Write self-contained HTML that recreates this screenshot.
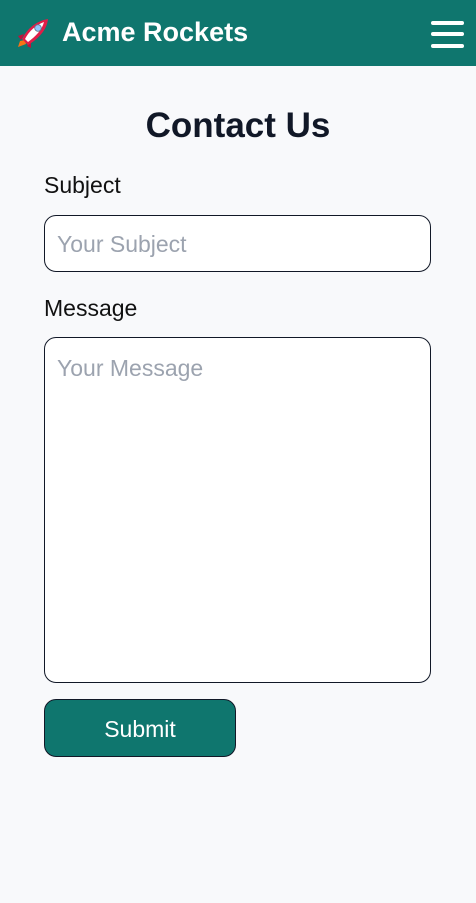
<!DOCTYPE html>
<html><head><style>
*{box-sizing:border-box;margin:0;padding:0}
body{width:476px;height:903px;background:#f8f9fb;font-family:"Liberation Sans",sans-serif;color:#111827;position:relative;overflow:hidden}
header{position:absolute;left:0;top:0;width:476px;height:66px;background:#0f766e}
.brand{position:absolute;left:62px;top:17px;color:#fff;font-size:27px;font-weight:bold}
.ham{position:absolute;left:431px;width:33px;height:4px;background:#fff;border-radius:2px}
h1{position:absolute;top:106px;left:0;width:476px;text-align:center;font-size:35px;font-weight:bold;color:#111827}
.lbl{position:absolute;left:44px;font-size:23px;color:#111}
.box{position:absolute;left:44px;width:387px;background:#fff;border:1px solid #111827;border-radius:12px;padding:0 12px;font-size:23px;color:#9ca3af}
.btn{position:absolute;left:44px;top:699px;width:192px;height:58px;background:#0f766e;border:1px solid #111827;border-radius:12px;color:#fff;font-size:23px;text-align:center;line-height:58px}
</style></head><body>
<header>
<svg style="position:absolute;left:16px;top:18px" width="34" height="31" viewBox="0 0 34 31">
<path d="M2 29 L4 23 L9 22 L10 26 Z" fill="#f97316"/>
<path d="M5 22 L2 18 L8 16 Z M11 28 L15 30 L15 24 Z" fill="#be123c"/>
<path d="M6 21 C11 11 20 3 32 1 C31 12 22 21 12 27 Z" fill="#e11d48"/>
<path d="M9 21 C13 13 20 7 28 4 C26 12 20 18 12 24 Z" fill="#fff"/>
<circle cx="22" cy="10" r="3.3" fill="#93c5fd" stroke="#64748b" stroke-width="0.8"/>
</svg>
<div class="brand">Acme Rockets</div>
<div class="ham" style="top:21px"></div>
<div class="ham" style="top:32px"></div>
<div class="ham" style="top:44px"></div>
</header>
<h1>Contact Us</h1>
<div class="lbl" style="top:172px">Subject</div>
<div class="box" style="top:215px;height:57px;line-height:57px">Your Subject</div>
<div class="lbl" style="top:295px">Message</div>
<div class="box" style="top:337px;height:346px;padding-top:17px">Your Message</div>
<div class="btn">Submit</div>
</body></html>
